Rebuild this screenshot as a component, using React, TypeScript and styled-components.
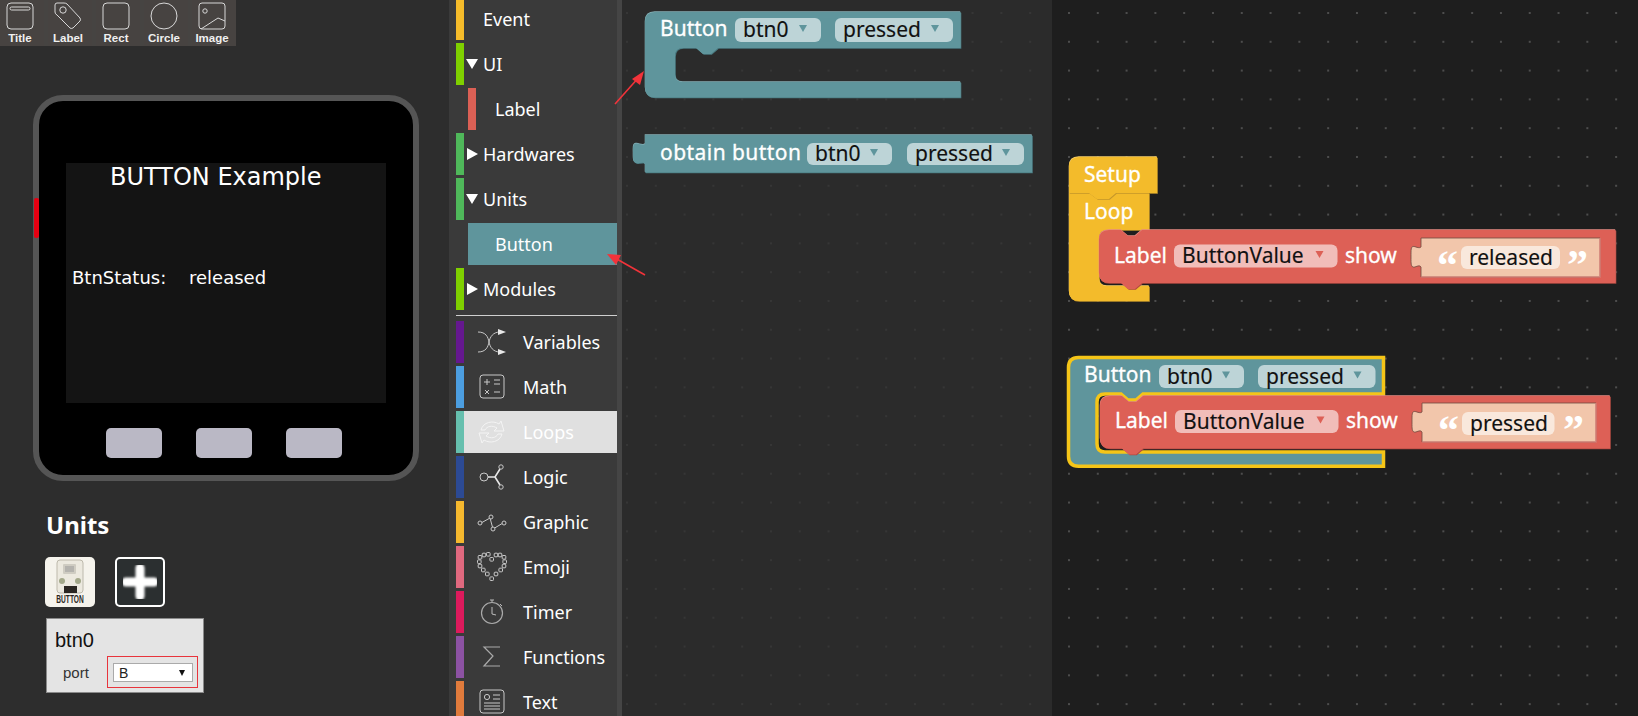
import React from 'react'
import styled, { createGlobalStyle } from 'styled-components'

const GlobalStyle = createGlobalStyle`
  html, body { margin: 0; padding: 0; background: #2d2d2d; overflow: hidden; }
  * { box-sizing: border-box; }
`

const Page = styled.div`
  position: relative;
  display: flex;
  width: 1638px;
  height: 716px;
  overflow: hidden;
  font-family: "Noto Sans", sans-serif;
`

/* left panel */
const LeftPanel = styled.div`
  width: 449px;
  flex: none;
  background: #2d2d2d;
`
const Palette = styled.div`
  display: flex;
  width: 236px;
  height: 46px;
  background: #474341;
  overflow: hidden;
`
const PaletteItem = styled.div`
  width: 48px;
  height: 46px;
  flex: none;
  padding: 2px 8px 0 0;
  display: flex;
  flex-direction: column;
  align-items: center;
  border-right: 4px solid #464442;
  svg { display: block; margin-left: 4px; }
`
const PaletteLabel = styled.span`
  margin: 1px 0 0 4px;
  font: bold 11.5px/14px "Liberation Sans", sans-serif;
  color: #f0f0f0;
  white-space: nowrap;
`
const Device = styled.div`
  position: relative;
  width: 386px;
  height: 386px;
  margin: 49px 0 0 33px;
  padding-top: 62px;
  background: #000;
  border: 6px solid #555;
  border-radius: 30px;
  display: flex;
  flex-direction: column;
  align-items: center;
`
const SideKey = styled.div`
  position: absolute;
  left: -5px;
  top: 97px;
  width: 5px;
  height: 40px;
  background: #e60012;
  border-radius: 2px;
`
const Screen = styled.div`
  position: relative;
  width: 320px;
  height: 240px;
  flex: none;
  background: #141414;
  color: #fff;
  font-family: "DejaVu Sans", sans-serif;
`
const ScreenText = styled.span<{ $x: number; $y: number; $size: number }>`
  position: absolute;
  left: ${p => p.$x}px;
  top: ${p => p.$y}px;
  font-size: ${p => p.$size}px;
  line-height: 1;
  white-space: nowrap;
`
const KeyRow = styled.div`
  display: flex;
  gap: 34px;
  margin: 25px 4px 0 0;
`
const Key = styled.div`
  width: 56px;
  height: 30px;
  border-radius: 5px;
  background: #bab8c5;
`
const UnitsTitle = styled.h2`
  margin: 29px 0 0 46px;
  font: bold 24px/30px "Noto Sans", sans-serif;
  color: #fff;
`
const UnitRow = styled.div`
  display: flex;
  gap: 20px;
  margin: 17px 0 0 45px;
`
const UnitTile = styled.div`
  width: 50px;
  height: 50px;
  border-radius: 5px;
  background: #f5f3ec;
`
const AddTile = styled.div`
  width: 50px;
  height: 50px;
  border: 2px solid #fff;
  border-radius: 5px;
  background: #2b2f30;
`
const UnitCard = styled.div`
  width: 158px;
  height: 75px;
  margin: 11px 0 0 46px;
  padding: 9px 0 0 8px;
  background: #e4e4e4;
  border: 1px solid #8a8a8a;
  font-family: "Liberation Sans", sans-serif;
  color: #111;
`
const CardName = styled.div`
  font-size: 20px;
  line-height: 24px;
`
const PortRow = styled.div`
  display: flex;
  align-items: center;
  margin-top: 4px;
`
const PortLabel = styled.span`
  width: 52px;
  padding-left: 8px;
  font-size: 15px;
  color: #333;
`
const PortFrame = styled.div`
  width: 91px;
  height: 32px;
  padding: 6px 5px;
  border: 1px solid #e8343c;
`
const PortSelect = styled.div`
  display: flex;
  justify-content: space-between;
  align-items: center;
  width: 80px;
  height: 19px;
  padding: 0 7px 0 5px;
  background: #fff;
  border: 1px solid #aaa;
  font-size: 14px;
  color: #222;
`
const SelectCaret = styled.span`
  width: 0;
  height: 0;
  border-left: 3.5px solid transparent;
  border-right: 3.5px solid transparent;
  border-top: 6px solid #111;
`

/* toolbox */
const Toolbox = styled.div`
  width: 168px;
  flex: none;
  display: flex;
  flex-direction: column;
  gap: 3px;
  margin-top: -2px;
  padding-left: 7px;
  background: #3a3a3a;
  overflow: hidden;
`
const Row = styled.div<{ $bar: string; $sub?: boolean; $selected?: boolean; $hot?: boolean }>`
  display: flex;
  align-items: center;
  height: 42px;
  flex: none;
  margin-left: ${p => (p.$sub ? 12 : 0)}px;
  border-left: 8px solid ${p => p.$bar};
  background: ${p => (p.$selected ? '#5f959c' : p.$hot ? '#e0e0e0' : 'transparent')};
  color: #fff;
  font-size: 18px;
  white-space: nowrap;
`
const Caret = styled.span<{ $open?: boolean }>`
  position: relative;
  width: 19px;
  height: 12px;
  flex: none;
  &::after {
    content: '';
    position: absolute;
    left: 2px;
    top: ${p => (p.$open ? 1 : 0)}px;
    border-style: solid;
    border-color: transparent;
    ${p => p.$open
      ? 'border-width: 10px 6px 0 6px; border-top-color: #fff;'
      : 'border-width: 6px 0 6px 11px; border-left-color: #fff; left: 3px;'}
  }
`
const RowIcon = styled.span`
  width: 44px;
  height: 30px;
  padding-left: 13px;
  flex: none;
  margin-right: 15px;
  svg { display: block; }
`
const RowText = styled.span<{ $pad?: number }>`
  padding-left: ${p => p.$pad ?? 0}px;
`
const Divider = styled.div`
  height: 1px;
  flex: none;
  margin: 2px 0;
  background: #cfcfcf;
`
const ScrollStrip = styled.div`
  width: 5px;
  flex: none;
  background: #454545;
`

/* block canvases */
const Flyout = styled.div`
  position: relative;
  width: 430px;
  flex: none;
  background-color: #2b2b2b;
  background-image: radial-gradient(circle at 1px 1px, #363636 1px, transparent 1.2px);
  background-size: 28.8px 28.8px;
  background-position: 4px 12px;
`
const Workspace = styled.div`
  position: relative;
  flex: 1;
  background-color: #1e1e1e;
  background-image: radial-gradient(circle at 1px 1px, #4d4d4d 1px, transparent 1.2px);
  background-size: 28.8px 28.8px;
  background-position: 16px 12px;
`
const BlockSvg = styled.svg<{ $x: number; $y: number }>`
  position: absolute;
  left: ${p => p.$x}px;
  top: ${p => p.$y}px;
  overflow: visible;
`
const BlockText = styled.text`
  font-family: "Noto Sans", sans-serif;
  font-size: 21px;
  fill: #fff;
  stroke: #fff;
  stroke-width: 0.3px;
`
const FieldText = styled(BlockText)`
  fill: #111;
  stroke: #111;
  stroke-width: 0.15px;
`
const QuoteMark = styled.text`
  font-family: "Liberation Serif", serif;
  font-weight: bold;
  font-size: 42px;
  fill: #fff;
`
const NoteArrow = styled.svg`
  position: absolute;
  left: 0;
  top: 0;
  overflow: visible;
`

const TEAL = { fill: '#5f959c', light: '#86b0b6', dark: '#4a7a81', field: '#bdd4d7' }
const RED = { fill: '#dd6056', light: '#e88a82', dark: '#b04a42', field: '#f1bdb9' }
const GOLD = { fill: '#f3bb2b', light: '#f8d06a', dark: '#c4962a', field: '' }

type Tone = typeof TEAL

const Bevel = ({ d, tone }: { d: string; tone: Tone }) => (
  <>
    <path d={d} fill={tone.dark} transform="translate(0.8 0.8)" />
    <path d={d} fill={tone.light} transform="translate(-0.3 -0.8)" />
    <path d={d} fill={tone.fill} />
  </>
)

const Field = ({ x, y, w, h = 24, text, tone }: { x: number; y: number; w: number; h?: number; text: string; tone: Tone }) => {
  const ax = x + w - 18
  const ay = y + h / 2 - 2
  return (
    <g>
      <rect x={x} y={y} width={w} height={h} rx={6} fill={tone.field} />
      <FieldText x={x + 8} y={y + h / 2 + 7}>{text}</FieldText>
      <path d={`M${ax - 4} ${ay - 3} H${ax + 4} L${ax} ${ay + 4} Z`} fill={tone.fill} />
    </g>
  )
}

const cPath = (w: number, head: number, inner: number, bottom: number, h: number, nx: number) =>
  `M10 0 H${w} V${head} H${nx + 22} L${nx + 15} ${head + 6} H${nx + 7} L${nx} ${head} H${inner + 8} ` +
  `Q${inner} ${head} ${inner} ${head + 8} V${bottom - 8} Q${inner} ${bottom} ${inner + 8} ${bottom} ` +
  `H${w} V${h} H10 Q0 ${h} 0 ${h - 10} V10 Q0 0 10 0 Z`

const StringBlock = ({ y, w, h, fw, fy, text, closeX }: { y: number; w: number; h: number; fw: number; fy: number; text: string; closeX: number }) => (
  <g transform={`translate(322 ${y})`}>
    <path
      d={`M0 0 H${w} V${h} H0 V29 C-2 26 -6 30 -8 29 C-10 28 -10 26 -10 19 C-10 11 -10 9 -8 8.5 C-6 8 -2 11 0 9 Z`}
      fill="#f2c6ab"
      stroke="#6e4a40"
      strokeWidth={0.8}
    />
    <path d={`M0 ${h} H${w} V0`} fill="none" stroke="#e88a82" strokeWidth={1.2} />
    <QuoteMark x={16} y={41}>“</QuoteMark>
    <rect x={40} y={fy} width={fw} height={23} rx={6} fill="#f9e8dc" />
    <FieldText x={48} y={fy + 18.5}>{text}</FieldText>
    <QuoteMark x={closeX} y={41}>”</QuoteMark>
  </g>
)

const LabelBlock = ({ x, y, w, h, tx, fy, sy, sw, sf, fw, text, closeX }: {
  x: number; y: number; w: number; h: number; tx: number; fy: number
  sy: number; sw: number; sf: number; fw: number; text: string; closeX: number
}) => (
  <BlockSvg $x={x} $y={y} width={w} height={h}>
    <Bevel
      tone={RED}
      d={`M10 0 H22 L29 6 H36 L43 0 H${w} V${h} H43 L36 ${h + 6} H29 L22 ${h} H10 Q0 ${h} 0 ${h - 10} V10 Q0 0 10 0 Z`}
    />
    <BlockText x={15} y={tx}>Label</BlockText>
    <Field x={75} y={fy} w={163.5} h={23} text="ButtonValue" tone={RED} />
    <BlockText x={246} y={tx}>show</BlockText>
    <StringBlock y={sy} w={sw} h={39} fw={fw} fy={sf} text={text} closeX={closeX} />
  </BlockSvg>
)

const stroke = { fill: 'none', stroke: '#d8d8d8', strokeWidth: 1 }
const thin = { fill: 'none', stroke: '#c8c8c8', strokeWidth: 1 }

const paletteIcons: Record<string, React.ReactNode> = {
  Title: <><rect x="1" y="1" width="26" height="26" rx="4" {...stroke} /><rect x="4" y="5" width="20" height="3" rx="1.5" {...stroke} /></>,
  Label: <><path d="M3 1 H10 Q12 1 13 2 L26 16 Q27 18 26 19 L19 26 Q17 27 16 26 L3 13 Q1 12 1 10 V3 Q1 1 3 1 Z" {...stroke} /><circle cx="9" cy="8" r="3.2" {...stroke} /></>,
  Rect: <rect x="1" y="1" width="26" height="26" rx="4" {...stroke} />,
  Circle: <circle cx="14" cy="14" r="13" {...stroke} />,
  Image: <><rect x="1" y="1" width="26" height="26" rx="3" {...stroke} /><circle cx="7" cy="9" r="2.2" {...stroke} /><path d="M3 27 L20 16 L27 19" {...stroke} /></>,
}

const heartDots = [
  [7, 3], [11.3, 2.3], [19, 3], [23, 3], [14.7, 7.3], [3, 5.3], [27, 5.3], [2.3, 9.7], [27.7, 9.7], [3, 14], [27, 14],
  [6.3, 18], [23.7, 18], [10.3, 22], [19, 22], [14.7, 26.7],
]

const sideIcons: Record<string, React.ReactNode> = {
  Variables: <><path d="M1 5 C9 5 11 10 12 15 C13 20 16 25 23 25 M1 25 C9 25 11 20 12 15 C13 10 16 5 23 5" {...thin} /><path d="M21 2 L29 5 L21 8 Z M21 22 L29 25 L21 28 Z" fill="#e8e8e8" /></>,
  Math: <><rect x="3" y="3" width="24" height="23" rx="3" {...thin} /><path d="M7 10 H13 M10 7 V13 M17 8 H23 M17 12 H23 M8 18 L12 22 M12 18 L8 22 M17 20 H23" {...thin} /></>,
  Loops: <g fill="none" stroke="#f4f4f4" strokeWidth="1"><path d="M4 13 C6 5 16 3 22 7 L24 4 L27 14 L17 14 L20 11 C15 8 10 9 8 13 Z" /><path d="M25 17 C23 25 13 27 7 23 L5 26 L2 16 L12 16 L9 19 C14 22 19 21 21 17 Z" /></g>,
  Logic: <><circle cx="7" cy="15" r="4" {...thin} /><path d="M11 15 H18 L23 7 M18 15 L23 23" fill="none" stroke="#e8e8e8" strokeWidth="1.6" /><circle cx="24" cy="5" r="2.2" {...thin} /><circle cx="24" cy="25" r="2.2" {...thin} /></>,
  Graphic: <><path d="M4 16 L13 11 L16 22 L26 16" {...thin} /><circle cx="3" cy="16" r="2" fill="#3a3a3a" stroke="#c8c8c8" /><circle cx="14" cy="10" r="2" fill="#3a3a3a" stroke="#c8c8c8" /><circle cx="16" cy="22" r="2" fill="#3a3a3a" stroke="#c8c8c8" /><circle cx="27" cy="16" r="2" fill="#3a3a3a" stroke="#c8c8c8" /></>,
  Emoji: <>{heartDots.map(([x, y]) => <rect key={`${x}-${y}`} x={x - 1.8} y={y - 1.8} width="3.6" height="3.6" rx="0.8" {...thin} />)}</>,
  Timer: <><circle cx="15" cy="16" r="10.5" fill="none" stroke="#aaa" strokeWidth="1.2" /><path d="M15 5 V3 M13 3 H17 M23 7 L25 9 M15 10 V17 L19 18" fill="none" stroke="#bbb" strokeWidth="1" /></>,
  Functions: <path d="M23 5 H7 L16 14 L7 24 H23" fill="none" stroke="#aaa" strokeWidth="1.2" />,
  Text: <><rect x="3" y="3" width="24" height="23" rx="3" {...thin} /><circle cx="10" cy="10" r="2.6" {...thin} /><path d="M16 8 H23 M16 12 H23 M7 16 H23 M7 19 H23 M7 22 H23" {...thin} /></>,
}

const categories: [string, string][] = [
  ['Variables', '#65188f'], ['Math', '#4c9ee0'], ['Loops', '#66bfae'], ['Logic', '#2c4a94'], ['Graphic', '#f5b82e'],
  ['Emoji', '#e0697f'], ['Timer', '#dc1a5c'], ['Functions', '#8c52a3'], ['Text', '#e07b3c'],
]

export default function App() {
  return (
    <Page>
      <GlobalStyle />
      <LeftPanel>
        <Palette>
          {Object.keys(paletteIcons).map(name => (
            <PaletteItem key={name}>
              <svg width="28" height="28" viewBox="0 0 28 28">{paletteIcons[name]}</svg>
              <PaletteLabel>{name}</PaletteLabel>
            </PaletteItem>
          ))}
        </Palette>
        <Device>
          <SideKey />
          <Screen>
            <ScreenText $x={44} $y={2} $size={24}>BUTTON Example</ScreenText>
            <ScreenText $x={6} $y={106} $size={18}>BtnStatus:</ScreenText>
            <ScreenText $x={123} $y={106} $size={18}>released</ScreenText>
          </Screen>
          <KeyRow><Key /><Key /><Key /></KeyRow>
        </Device>
        <UnitsTitle>Units</UnitsTitle>
        <UnitRow>
          <UnitTile>
            <svg width="50" height="50" viewBox="0 0 50 50">
              <rect x="12" y="3" width="26" height="33" rx="3" fill="#ece9df" stroke="#bdb9ac" />
              <rect x="18" y="7" width="13" height="10" rx="1" fill="#cfccc2" />
              <path d="M20 10 H29 M20 12 H29 M20 14 H29" stroke="#999" strokeWidth="1" />
              <circle cx="17" cy="24" r="3" fill="#a3a88a" />
              <circle cx="33" cy="24" r="3" fill="#a3a88a" />
              <rect x="19" y="29" width="13" height="7" fill="#2a2622" />
              <text transform="translate(25 46) scale(0.66 1)" textAnchor="middle" fontFamily="Liberation Sans" fontWeight="bold" fontSize="10" fill="#2a2622">BUTTON</text>
            </svg>
          </UnitTile>
          <AddTile>
            <svg width="46" height="46" viewBox="0 0 46 46">
              <defs><filter id="soft"><feGaussianBlur stdDeviation="0.8" /></filter></defs>
              <path d="M23 9 V37 M9 23 H37" stroke="#fff" strokeWidth="9" strokeLinecap="round" filter="url(#soft)" />
            </svg>
          </AddTile>
        </UnitRow>
        <UnitCard>
          <CardName>btn0</CardName>
          <PortRow>
            <PortLabel>port</PortLabel>
            <PortFrame><PortSelect>B<SelectCaret /></PortSelect></PortFrame>
          </PortRow>
        </UnitCard>
      </LeftPanel>

      <Toolbox>
        <Row $bar="#f5bb2a"><RowText $pad={19}>Event</RowText></Row>
        <Row $bar="#7fd000"><Caret $open />UI</Row>
        <Row $bar="#db6055" $sub><RowText $pad={19}>Label</RowText></Row>
        <Row $bar="#4fb85a"><Caret />Hardwares</Row>
        <Row $bar="#4fb85a"><Caret $open />Units</Row>
        <Row $bar="#5f959c" $sub $selected><RowText $pad={19}>Button</RowText></Row>
        <Row $bar="#7fd000"><Caret />Modules</Row>
        <Divider />
        {categories.map(([name, color]) => (
          <Row key={name} $bar={color} $hot={name === 'Loops'}>
            <RowIcon><svg width="30" height="30" viewBox="0 0 30 30">{sideIcons[name]}</svg></RowIcon>
            {name}
          </Row>
        ))}
      </Toolbox>
      <ScrollStrip />

      <Flyout>
        <BlockSvg $x={23} $y={12} width={316} height={86}>
          <Bevel tone={TEAL} d={cPath(315.5, 36, 30, 70, 85.5, 51)} />
          <BlockText x={15} y={24}>Button</BlockText>
          <Field x={90} y={6} w={86} text="btn0" tone={TEAL} />
          <Field x={190} y={6} w={118} text="pressed" tone={TEAL} />
        </BlockSvg>
        <BlockSvg $x={23} $y={135} width={387} height={38}>
          <Bevel tone={TEAL} d="M0 0 H387 V37.5 H0 V29 C-2 26 -6 29 -9 28 C-12 27 -12 25 -12 18 C-12 11 -12 9 -9 8.5 C-6 8 -2 11 0 9 Z" />
          <BlockText x={15} y={25} letterSpacing="0.45">obtain button</BlockText>
          <Field x={162} y={8} w={85} h={22} text="btn0" tone={TEAL} />
          <Field x={262} y={8} w={117} h={22} text="pressed" tone={TEAL} />
        </BlockSvg>
      </Flyout>

      <Workspace>
        <BlockSvg $x={17} $y={157} width={88} height={145}>
          <Bevel tone={GOLD} d="M0 36 H80 V73 H38 Q30 73 30 81 V121 Q30 129 38 129 H80 V144 H10 Q0 144 0 134 Z" />
          <Bevel tone={GOLD} d="M10 0 H88 V36 H47 L40 42 H28 L20 36 H0 V10 Q0 0 10 0 Z" />
          <BlockText x={15} y={25}>Setup</BlockText>
          <BlockText x={15} y={62}>Loop</BlockText>
        </BlockSvg>
        <LabelBlock x={47} y={230} w={516.5} h={53} tx={33} fy={14.5} sy={8} sw={179} sf={8} fw={99} text="released" closeX={146} />

        <BlockSvg $x={15} $y={356} width={318} height={112}>
          <path
            d={cPath(315, 36.5, 28.5, 94.5, 108.75, 52.5)}
            transform="translate(1.5 1.5)"
            fill="#5f959c"
            stroke="#f5c518"
            strokeWidth={3.5}
          />
          <BlockText x={17} y={26}>Button</BlockText>
          <Field x={92} y={9} w={85} h={23} text="btn0" tone={TEAL} />
          <Field x={191} y={9} w={117.5} h={23} text="pressed" tone={TEAL} />
        </BlockSvg>
        <LabelBlock x={47.5} y={396} w={510} h={52.5} tx={32} fy={14} sy={7} sw={174} sf={9} fw={92.5} text="pressed" closeX={141} />
      </Workspace>

      <NoteArrow width={1} height={1}>
        <path d="M615 104 L640 76" stroke="#f2333a" strokeWidth={1.6} />
        <path d="M644 71 L632 79 L640 85 Z" fill="#f2333a" />
        <path d="M645 275 L615 258" stroke="#f2333a" strokeWidth={1.6} />
        <path d="M607 254 L621 255 L616 265 Z" fill="#f2333a" />
      </NoteArrow>
    </Page>
  )
}
